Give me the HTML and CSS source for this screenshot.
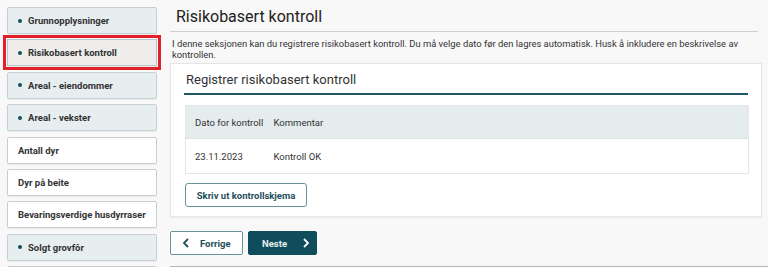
FILE: index.html
```html
<!DOCTYPE html>
<html lang="no">
<head>
<meta charset="utf-8">
<link rel="stylesheet" href="styles.css">
</head>
<body>
<div class="page">
  <nav class="sidebar">
    <div class="item dotted"><span class="dot"></span>Grunnopplysninger</div>
    <div class="item dotted selected"><span class="dot"></span>Risikobasert kontroll</div>
    <div class="item dotted"><span class="dot"></span>Areal - eiendommer</div>
    <div class="item dotted"><span class="dot"></span>Areal - vekster</div>
    <div class="item">Antall dyr</div>
    <div class="item">Dyr på beite</div>
    <div class="item">Bevaringsverdige husdyrraser</div>
    <div class="item dotted"><span class="dot"></span>Solgt grovfôr</div>
    <div class="item dotted"></div>
  </nav>
  <main class="main">
    <h1 class="title">Risikobasert kontroll</h1>
    <p class="intro">I denne seksjonen kan du registrere risikobasert kontroll. Du må velge dato før den lagres automatisk. Husk å inkludere en beskrivelse av kontrollen.</p>
    <section class="card">
      <h2 class="card-title">Registrer risikobasert kontroll</h2>
      <table class="table">
        <thead>
          <tr><th class="c1">Dato for kontroll</th><th>Kommentar</th></tr>
        </thead>
        <tbody>
          <tr><td class="c1">23.11.2023</td><td>Kontroll OK</td></tr>
        </tbody>
      </table>
      <button class="print">Skriv ut kontrollskjema</button>
    </section>
    <div class="nav">
      <button class="btn prev"><svg width="8" height="10" viewBox="0 0 8 10"><path d="M6 1 L2 5 L6 9" fill="none" stroke="#1d4f5e" stroke-width="1.8"/></svg><span>Forrige</span></button>
      <button class="btn next"><span>Neste</span><svg width="8" height="10" viewBox="0 0 8 10"><path d="M2 1 L6 5 L2 9" fill="none" stroke="#ffffff" stroke-width="1.8"/></svg></button>
    </div>
    <div class="bottom-line"></div>
  </main>
</div>
</body>
</html>
```
FILE: styles.css
```css
* { box-sizing: border-box; }
html, body { margin: 0; padding: 0; }
body {
  background: #f8f8f8;
  font-family: Roboto, "Liberation Sans", Arial, sans-serif;
  color: #333;
  width: 768px;
  height: 267px;
  overflow: hidden;
}
.page {
  display: flex;
  align-items: flex-start;
  height: 267px;
  overflow: hidden;
}
.sidebar {
  width: 170px;
  padding: 7px 0 0 7px;
  display: flex;
  flex-direction: column;
  gap: 5.4px;
}
.item {
  width: 150px;
  height: 27px;
  border: 1px solid #c9cfd1;
  border-radius: 2px;
  background: #ffffff;
  display: flex;
  align-items: center;
  padding-left: 10px;
  font-size: 9.5px;
  font-weight: 700;
  color: #333;
  box-shadow: 0 1px 1px rgba(0,0,0,0.06);
  flex: none;
}
.item.dotted {
  background: #e7eef0;
  border-color: #c6d0d3;
}
.item.selected {
  background: #eeedeb;
  border-color: #b9c7cb;
  border-radius: 0;
  outline: 3px solid #e3202a;
  outline-offset: 1.5px;
}
.dot {
  width: 4px;
  height: 4px;
  border-radius: 50%;
  background: #124f5e;
  margin-right: 6px;
  flex: none;
}
.main {
  flex: 1;
  padding-top: 7px;
  min-width: 0;
}
.title {
  margin: 0 0 0 6px;
  font-size: 16px;
  font-weight: 400;
  color: #222;
  line-height: 20px;
  height: 24px;
}
.intro {
  margin: 0;
  border-top: 1px solid #cfcfcf;
  width: 588px;
  padding: 6px 6px 0 2px;
  font-size: 9.4px;
  line-height: 11px;
  color: #333;
}
.card {
  margin-top: 3px;
  width: 592px;
  height: 154px;
  background: #fff;
  border: 1px solid #e6e6e6;
  box-shadow: 0 1px 2px rgba(0,0,0,0.05);
  padding: 0 13px 0 13px;
}
.card-title {
  margin: 0;
  font-size: 13px;
  font-weight: 400;
  color: #333;
  line-height: 16px;
  padding: 8px 0 0 2px;
  height: 31px;
  border-bottom: 2px solid #1e5666;
}
.table {
  margin-top: 10px;
  margin-left: 1px;
  width: 564px;
  border-collapse: collapse;
  border: 1px solid #e3e7e8;
  font-size: 9.5px;
  color: #333;
}
.table th {
  background: #e4ecee;
  font-weight: 400;
  text-align: left;
  height: 33px;
  padding: 0;
  border-bottom: 1px solid #dde3e5;
}
.table td {
  height: 35px;
  padding: 0;
}
.table .c1 {
  width: 88px;
  padding-left: 9px;
}
.print {
  margin-top: 9px;
  margin-left: 1px;
  width: 122px;
  height: 24px;
  border: 1.5px solid #6a929c;
  border-radius: 3px;
  background: #fff;
  font-family: inherit;
  font-size: 9.5px;
  font-weight: 700;
  color: #1d4f5e;
  padding: 0;
}
.nav {
  display: flex;
  gap: 5px;
  margin-top: 14px;
}
.btn {
  height: 24px;
  border-radius: 2px;
  font-family: inherit;
  font-size: 9.5px;
  font-weight: 700;
  display: flex;
  align-items: center;
  padding: 0;
}
.prev {
  width: 73px;
  background: #fff;
  border: 1.5px solid #6a929c;
  color: #1d4f5e;
  padding-left: 11px;
  gap: 10px;
}
.next {
  width: 69px;
  background: #0f4d5d;
  border: 1px solid #0f4d5d;
  color: #e8eef0;
  padding-left: 13px;
  gap: 15px;
}
.bottom-line {
  margin-top: 11px;
  height: 2px;
  background: #b5b5b5;
  width: 598px;
}
```
